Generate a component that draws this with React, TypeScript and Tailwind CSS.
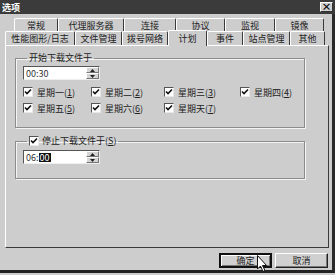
const FONT = "font-['Noto_Sans_CJK_SC','Noto_Sans',sans-serif]"

const ROW1 = [
  { label: '常规', w: 44 },
  { label: '代理服务器', w: 66 },
  { label: '连接', w: 52 },
  { label: '协议', w: 49 },
  { label: '监视', w: 50 },
  { label: '镜像', w: 49 },
]

const ROW2 = [
  { label: '性能图形/日志', w: 70 },
  { label: '文件管理', w: 47 },
  { label: '拨号网络', w: 46 },
  { label: '计划', w: 39, active: true },
  { label: '事件', w: 36 },
  { label: '站点管理', w: 47 },
  { label: '其他', w: 35 },
]

const DAYS = [
  { label: '星期一', key: '1' },
  { label: '星期二', key: '2' },
  { label: '星期三', key: '3' },
  { label: '星期四', key: '4' },
  { label: '星期五', key: '5' },
  { label: '星期六', key: '6' },
  { label: '星期天', key: '7' },
]

function Check() {
  return (
    <span className="flex h-[10px] w-[10px] shrink-0 items-center justify-center border border-b-[#e8e8e8] border-l-[#555] border-r-[#e8e8e8] border-t-[#555] bg-white">
      <svg width="8" height="8" viewBox="0 0 8 8">
        <path d="M1 3.5 L3 5.5 L7 1.5" fill="none" stroke="#111" strokeWidth="1.6" />
      </svg>
    </span>
  )
}

function Spin({ children }: { children: React.ReactNode }) {
  return (
    <div className="flex h-[14px] w-[77px] border border-b-[#eee] border-l-[#555] border-r-[#eee] border-t-[#555] bg-white">
      <div className="flex flex-1 items-center pl-[2px] text-[9px] leading-none text-[#333]">{children}</div>
      <div className="flex w-[13px] flex-col">
        <div className="flex flex-1 items-center justify-center border border-b-[#777] border-l-white border-r-[#777] border-t-white bg-[#d4d4d4]">
          <svg width="5" height="3" viewBox="0 0 5 3"><path d="M0 3 L2.5 0 L5 3Z" fill="#222" /></svg>
        </div>
        <div className="flex flex-1 items-center justify-center border border-b-[#777] border-l-white border-r-[#777] border-t-white bg-[#d4d4d4]">
          <svg width="5" height="3" viewBox="0 0 5 3"><path d="M0 0 L2.5 3 L5 0Z" fill="#222" /></svg>
        </div>
      </div>
    </div>
  )
}

export default function App() {
  return (
    <div className={`relative h-[275px] w-[335px] overflow-hidden bg-[#cdcdcd] text-[#222] ${FONT}`}>
      <div className="flex h-[14px] items-center justify-between bg-[#3b3b3b] pl-[2px] pr-[2px]">
        <span className="text-[9px] font-bold leading-none text-white">选项</span>
        <span className="flex h-[10px] w-[13px] items-center justify-center border border-b-[#333] border-l-white border-r-[#333] border-t-white bg-[#d0d0d0] text-[10px] font-bold leading-none text-black">
          ×
        </span>
      </div>

      <div className="flex h-[259px] flex-col border-b-[3px] border-r-[3px] border-b-[#222] border-r-[#2a2a2a] pl-[5px] pr-[3px]">
        <div className="mt-[4px] flex h-[13px] pl-[9px]">
          {ROW1.map((t) => (
            <div
              key={t.label}
              style={{ width: t.w }}
              className="flex items-center justify-center rounded-t-[2px] border-l border-r border-t border-l-white border-r-[#3a3a3a] border-t-white text-[9px] leading-none"
            >
              {t.label}
            </div>
          ))}
        </div>
        <div className="flex h-[14px] items-end">
          {ROW2.map((t) =>
            t.active ? (
              <div
                key={t.label}
                style={{ width: t.w }}
                className="relative z-10 -mb-[1px] flex h-[16px] items-center justify-center rounded-t-[2px] border-l border-r border-t border-l-white border-r-[#3a3a3a] border-t-white bg-[#cdcdcd] text-[9px] leading-none"
              >
                {t.label}
              </div>
            ) : (
              <div
                key={t.label}
                style={{ width: t.w }}
                className="flex h-[14px] items-center justify-center rounded-t-[2px] border-l border-r border-t border-l-white border-r-[#3a3a3a] border-t-white text-[9px] leading-none"
              >
                {t.label}
              </div>
            ),
          )}
        </div>

        <div className="h-[203px] border border-b-[#3a3a3a] border-l-white border-r-[#3a3a3a] border-t-white pl-[9px] pt-[6px]">
          <fieldset className="h-[76px] w-[290px] border border-[#8c8c8c] pl-[7px] shadow-[1px_1px_0_#f4f4f4,inset_1px_1px_0_#f4f4f4]">
            <legend className="ml-[4px] px-[2px] text-[9px] leading-[12px]">开始下载文件于</legend>
            <div className="mt-[2px]">
              <Spin>00:30</Spin>
            </div>
            <div className="mt-[7px] grid grid-cols-[68px_73px_76px_60px] gap-y-[6px] text-[9px] leading-none">
              {DAYS.map((d) => (
                <div key={d.key} className="flex items-center gap-[4px]">
                  <Check />
                  <span>
                    {d.label}(<u>{d.key}</u>)
                  </span>
                </div>
              ))}
            </div>
          </fieldset>

          <fieldset className="mt-[7px] h-[44px] w-[290px] border border-[#8c8c8c] pl-[7px] shadow-[1px_1px_0_#f4f4f4,inset_1px_1px_0_#f4f4f4]">
            <legend className="ml-[4px] flex items-center gap-[3px] px-[2px] text-[9px] leading-[12px]">
              <Check />
              <span>
                停止下载文件于(<u>S</u>)
              </span>
            </legend>
            <div className="mt-[3px]">
              <Spin>
                06:<span className="bg-[#111] px-[1px] text-white">00</span>
              </Spin>
            </div>
          </fieldset>
        </div>

        <div className="mt-[5px] flex justify-end gap-[3px] pr-[1px]">
          <button className="flex h-[15px] w-[53px] items-center justify-center border-2 border-[#111] bg-[#d0d0d0] text-[9px] leading-none shadow-[inset_1px_1px_0_#fff,inset_-1px_-1px_0_#777]">
            确定
          </button>
          <button className="flex h-[15px] w-[53px] items-center justify-center border border-b-[#222] border-l-white border-r-[#222] border-t-white bg-[#d0d0d0] text-[9px] leading-none shadow-[inset_-1px_-1px_0_#777]">
            取消
          </button>
        </div>
      </div>

      <svg className="absolute left-[257px] top-[255px]" width="11" height="18" viewBox="0 0 11 18">
        <path d="M0.5 0.5 L0.5 14 L3.5 11 L6 16.5 L8 15.5 L5.5 10.5 L9.5 10.5 Z" fill="#fff" stroke="#111" strokeWidth="1" />
      </svg>
    </div>
  )
}
